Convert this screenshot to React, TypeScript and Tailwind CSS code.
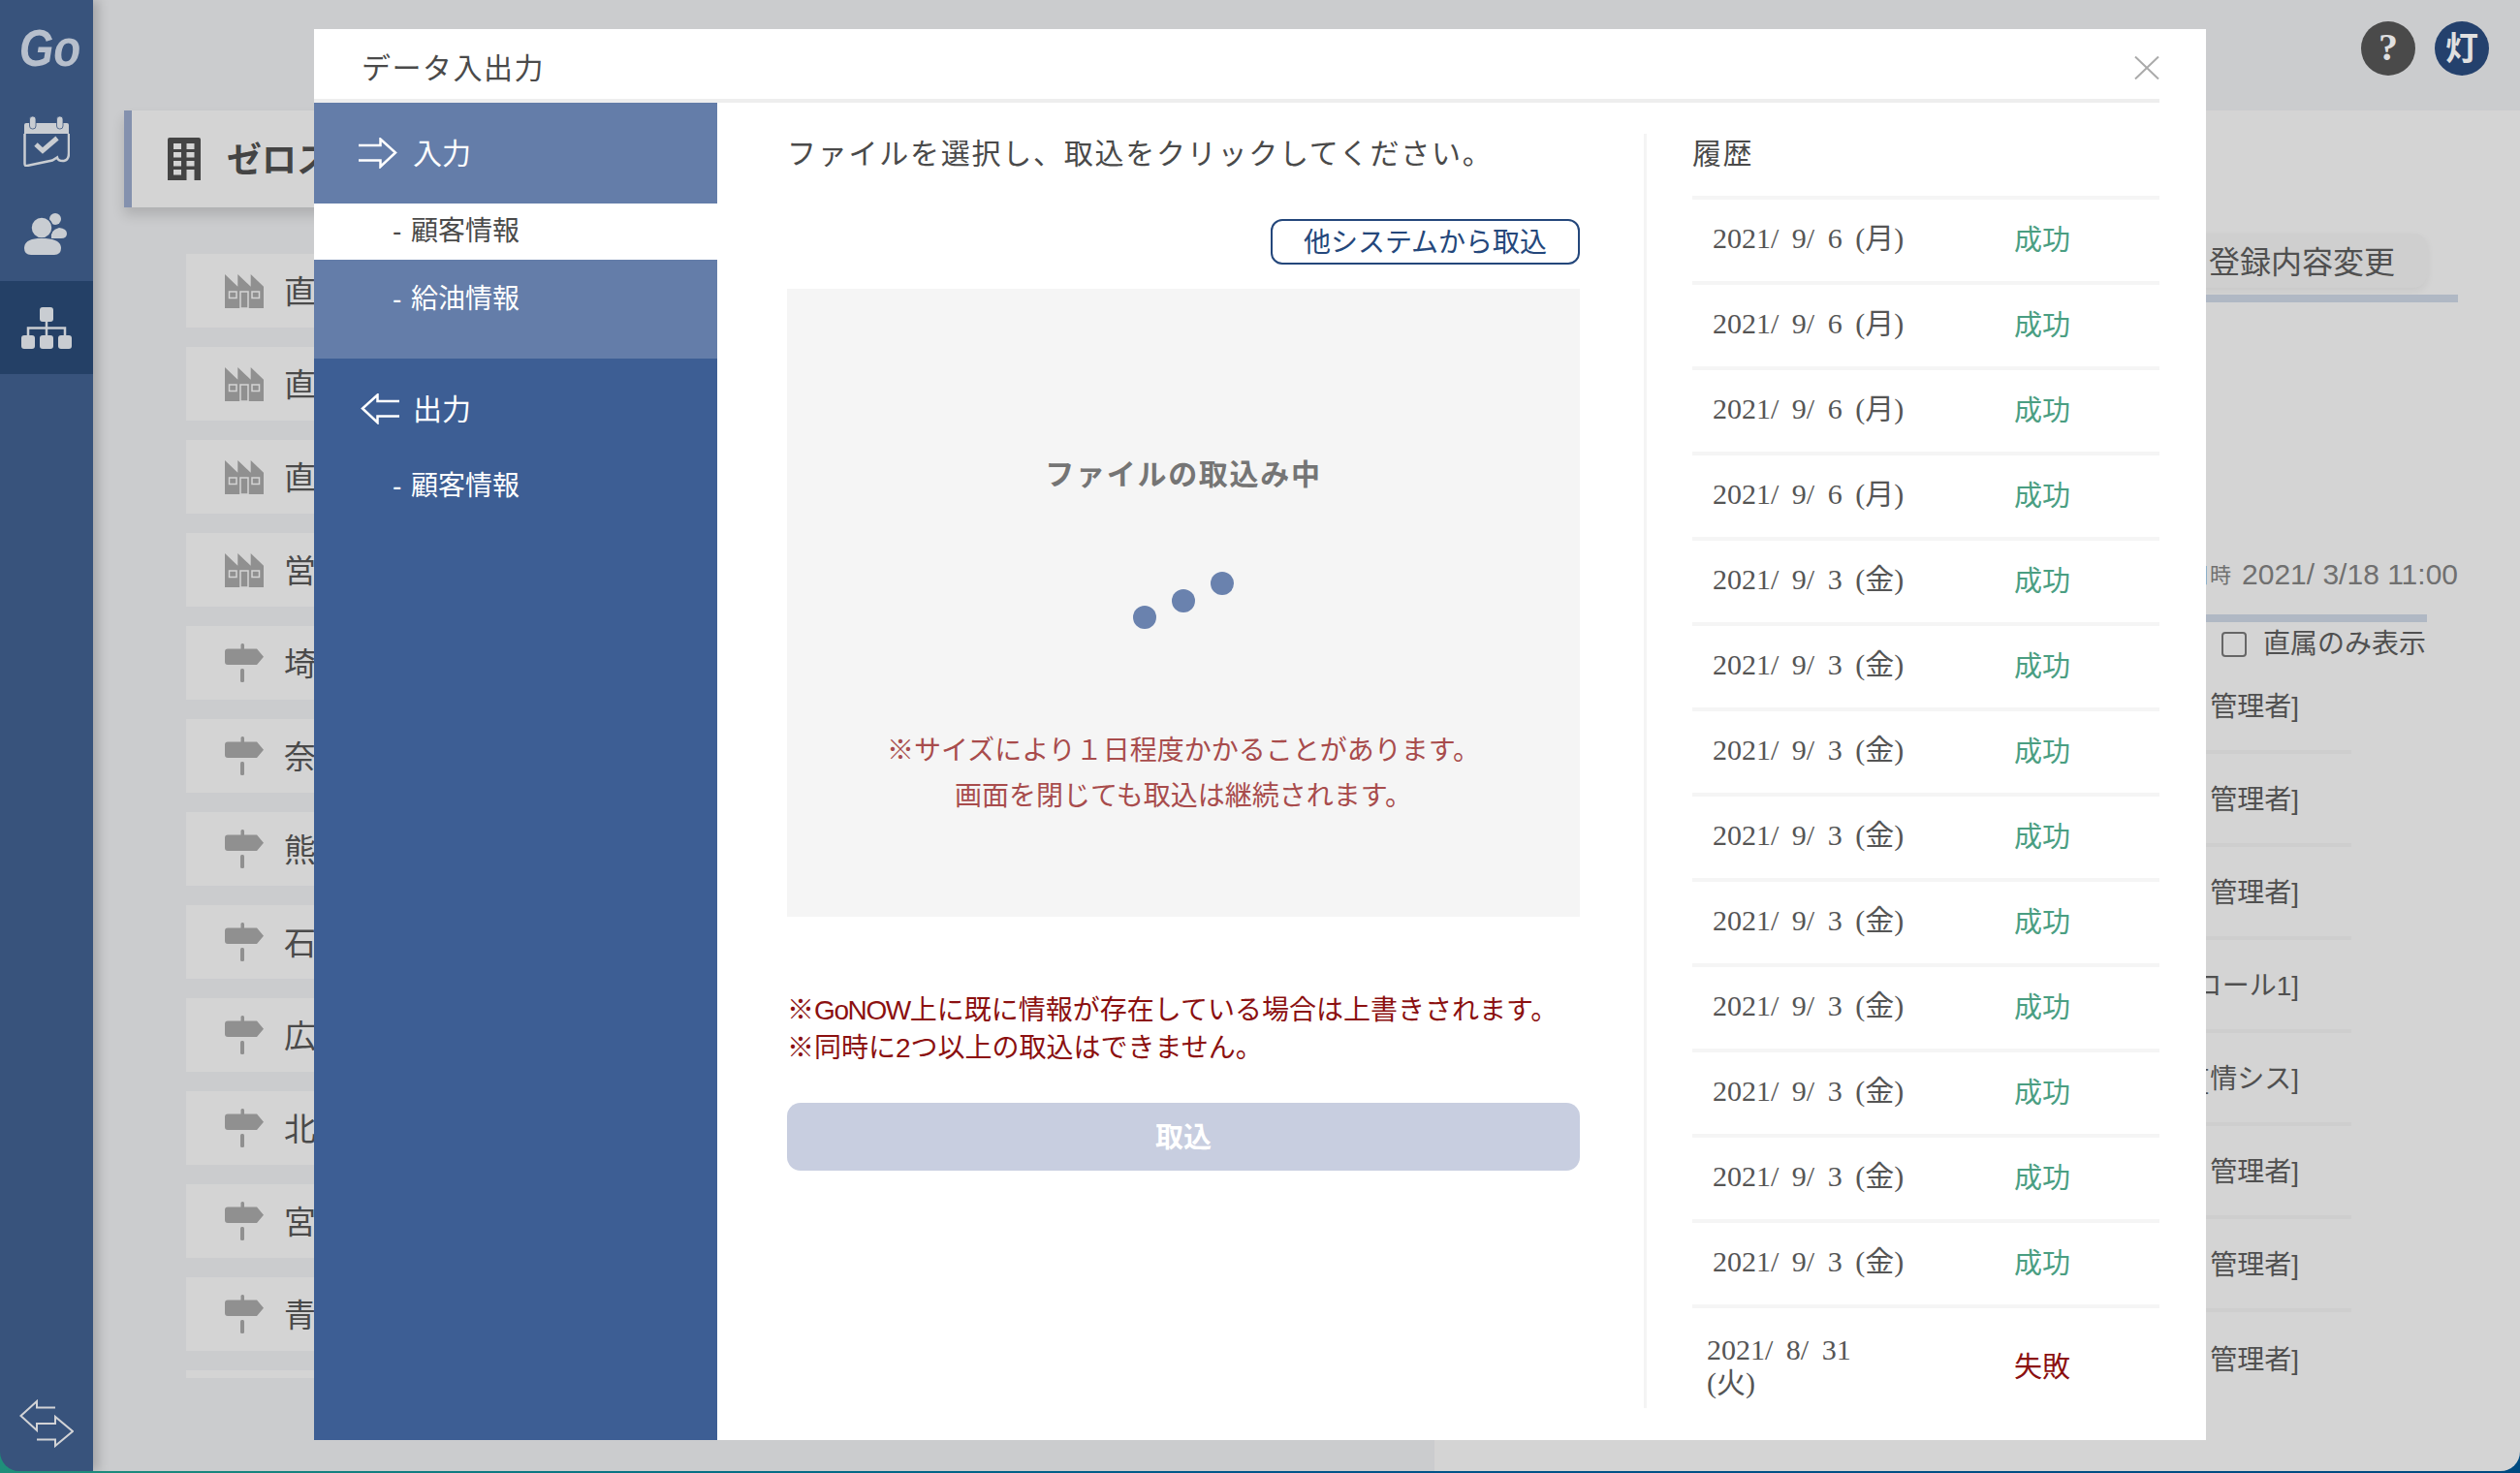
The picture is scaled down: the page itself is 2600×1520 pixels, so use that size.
const sans = "[font-family:'Liberation_Sans','Noto_Sans_CJK_JP',sans-serif]";

const historyRows = [
  "2021/ 9/ 6 (月)",
  "2021/ 9/ 6 (月)",
  "2021/ 9/ 6 (月)",
  "2021/ 9/ 6 (月)",
  "2021/ 9/ 3 (金)",
  "2021/ 9/ 3 (金)",
  "2021/ 9/ 3 (金)",
  "2021/ 9/ 3 (金)",
  "2021/ 9/ 3 (金)",
  "2021/ 9/ 3 (金)",
  "2021/ 9/ 3 (金)",
  "2021/ 9/ 3 (金)",
  "2021/ 9/ 3 (金)",
];

const orgRows = [
  { icon: "factory", name: "直営業部" },
  { icon: "factory", name: "直販部" },
  { icon: "factory", name: "直送部" },
  { icon: "factory", name: "営業部" },
  { icon: "sign", name: "埼玉支店" },
  { icon: "sign", name: "奈良支店" },
  { icon: "sign", name: "熊本支店" },
  { icon: "sign", name: "石川支店" },
  { icon: "sign", name: "広島支店" },
  { icon: "sign", name: "北海道支店" },
  { icon: "sign", name: "宮城支店" },
  { icon: "sign", name: "青森支店" },
  { icon: "sign", name: "" },
];

const roles = ["管理者", "管理者", "管理者", "コール1", "情シス", "管理者", "管理者", "管理者"];

function CalendarIcon() {
  return (
    <svg width="48" height="52" viewBox="0 0 48 52" fill="none">
      <path d="M1 18V9a2 2 0 0 1 2-2h42a2 2 0 0 1 2 2v9z" fill="#c9cdd2" />
      <rect x="6.5" y="0" width="6.500" height="13" rx="3" fill="#c9cdd2" stroke="#38537c" strokeWidth="0.8" />
      <rect x="34.5" y="0" width="6.500" height="13" rx="3" fill="#c9cdd2" stroke="#38537c" strokeWidth="0.8" />
      <path d="M1.500 18V49q0 2.500 2.500 2L30 45.500l5-3q1 4 7 3.500q5-1 5-8V18" stroke="#c9cdd2" strokeWidth="2.500" />
      <path d="M13 29l7 6.500L35 22.500" stroke="#c9cdd2" strokeWidth="5" />
    </svg>
  );
}

function UserIcon() {
  return (
    <svg width="46" height="44" viewBox="26 220 46 44">
      <circle cx="58" cy="226" r="6" fill="#c9cdd2" />
      <path d="M54 246q-2-8 8-11q8 1 8 6q0 5-6 5z" fill="#c9cdd2" />
      <circle cx="44" cy="235" r="11" fill="#c9cdd2" stroke="#38537c" strokeWidth="1.500" />
      <path d="M26 256q0-9 14-10h8q16 1 16 10q0 7-7 7H33q-7 0-7-7z" fill="#c9cdd2" />
    </svg>
  );
}

function OrgIcon() {
  return (
    <svg width="52" height="43" viewBox="22 316 52 43">
      <path d="M48 331v14M29 345v-7.500h38v7.500" fill="none" stroke="#c9cdd2" strokeWidth="2.500" />
      <rect x="41" y="316" width="14" height="15" rx="3" fill="#c9cdd2" />
      <rect x="22" y="345" width="14" height="14" rx="3" fill="#c9cdd2" />
      <rect x="41" y="345" width="14" height="14" rx="3" fill="#c9cdd2" />
      <rect x="60" y="345" width="14" height="14" rx="3" fill="#c9cdd2" />
    </svg>
  );
}

function SwapIcon() {
  return (
    <svg width="56" height="50" viewBox="20 1445 56 50" fill="none" stroke="#d2d3d6" strokeWidth="2">
      <path d="M57 1453.500H38V1447L21.500 1462 38 1477v-7H57" />
      <path d="M38 1486.500H57V1493L75 1478 57 1463v7H38" />
    </svg>
  );
}

function BuildingIcon() {
  return (
    <svg width="34" height="44" viewBox="0 0 34 44">
      <path d="M0 44V2a2 2 0 0 1 2-2h30a2 2 0 0 1 2 2v42z" fill="#444444" />
      <rect x="6" y="6" width="8" height="6" fill="#d4d4d4" />
      <rect x="19.500" y="6" width="8" height="6" fill="#d4d4d4" />
      <rect x="6" y="15" width="8" height="5.500" fill="#d4d4d4" />
      <rect x="19.500" y="15" width="8" height="5.500" fill="#d4d4d4" />
      <rect x="6" y="24" width="8" height="5.500" fill="#d4d4d4" />
      <rect x="19.500" y="24" width="8" height="5.500" fill="#d4d4d4" />
      <rect x="6" y="33" width="8" height="5.500" fill="#d4d4d4" />
      <rect x="19.500" y="33" width="8" height="11" fill="#d4d4d4" />
    </svg>
  );
}

function FactoryIcon() {
  return (
    <svg width="40" height="35" viewBox="0 0 40 35" className="shrink-0">
      <path d="M0 0l13.300 12.700V0l13.400 12.700V0L40 12.700V35H0z" fill="#909090" />
      <rect x="4.500" y="18" width="7.500" height="6.500" fill="#909090" stroke="#d4d4d4" strokeWidth="1.500" />
      <rect x="16" y="18" width="8" height="17" fill="#909090" stroke="#d4d4d4" strokeWidth="1.500" />
      <rect x="28" y="18" width="7.500" height="6.500" fill="#909090" stroke="#d4d4d4" strokeWidth="1.500" />
    </svg>
  );
}

function SignIcon() {
  return (
    <svg width="40" height="40" viewBox="0 0 40 40" className="shrink-0">
      <rect x="16.500" y="0" width="3.500" height="8" rx="1.500" fill="#909090" />
      <path d="M3 5.500H33L40 13.700 33 22H3a3 3 0 0 1-3-3V8.500a3 3 0 0 1 3-3z" fill="#909090" />
      <rect x="16" y="26" width="4" height="14" rx="1.500" fill="#909090" />
    </svg>
  );
}

function Sidebar() {
  return (
    <aside className="relative z-10 w-[96px] shrink-0 bg-[#38537c] shadow-[6px_0_10px_rgba(0,0,0,0.18)] flex flex-col items-stretch">
      <div className="h-[98px] flex items-center justify-center pl-[6px]">
        <span className="text-[54px] font-bold italic text-[#b7bfcc] scale-x-[0.85] leading-none">Go</span>
      </div>
      <div className="h-[96px] flex items-center justify-center">
        <CalendarIcon />
      </div>
      <div className="h-[96px] flex items-center justify-center">
        <UserIcon />
      </div>
      <div className="h-[96px] flex items-center justify-center bg-[#244066]">
        <OrgIcon />
      </div>
      <div className="mt-auto pb-[24px] pl-[20px]">
        <SwapIcon />
      </div>
    </aside>
  );
}

function BackgroundLeft() {
  return (
    <div className="w-[1384px] shrink-0 pl-[32px] bg-[#cbccce] h-full">
      <div className="w-[1200px] h-[100px] border-l-8 border-[#8491ae] bg-[#d4d4d4] shadow-[0_8px_12px_rgba(0,0,0,0.14)] flex items-center pl-[37px] gap-[27px]">
        <BuildingIcon />
        {/* clipped where the modal starts */}
        <span className="w-[90px] overflow-hidden whitespace-nowrap pt-[3px] text-[36px] font-bold text-[#444444]">ゼロスタート</span>
      </div>
      <div className="mt-[48px] ml-[64px] w-[1200px] h-[1160px] overflow-hidden flex flex-col gap-[20px]">
        {orgRows.map((row, i) => (
          <div key={i} className="h-[76px] shrink-0 bg-[#d4d4d4] flex items-center pl-[40px] gap-[21px]">
            {row.icon === "factory" ? <FactoryIcon /> : <SignIcon />}
            <span className="w-[31px] overflow-hidden whitespace-nowrap pt-[4px] text-[33px] text-[#4a4a4a]">{row.name}</span>
          </div>
        ))}
      </div>
    </div>
  );
}

function BackgroundRight() {
  return (
    <div className="flex-1 bg-[#d4d4d4] h-full flex flex-col items-end text-[#505050]">
      <div className="mt-[127px] mr-[96px] h-[56px] w-[500px] flex items-center justify-end pr-[33px] pt-[3px] text-[32px] bg-[#cfcfcf] rounded-[14px] shadow-[0_3px_8px_rgba(0,0,0,0.06)]">
        登録内容変更
      </div>
      <div className="mt-[7px] mr-[64px] h-[8px] w-[800px] bg-[#b0b8c4]" />
      <div className="mt-[260px] mr-[64px] h-[40px] flex items-center gap-[11px] text-[30px] text-[#707070]">
        <span className="text-[22px] pt-[3px]">更新日時</span>
        2021/ 3/18 11:00
      </div>
      <div className="mt-[22px] mr-[96px] h-[8px] w-[800px] bg-[#b0b8c4]" />
      <div className="mt-[10px] mr-[97px] h-[26px] flex items-center gap-[17px] text-[28px]">
        <span className="w-[26px] h-[26px] rounded-[4px] border-2 border-[#666666]" />
        直属のみ表示
      </div>
      <div className="mt-[4px] mr-[174px] w-[700px]">
        {roles.map((role, i) => (
          <div
            key={i}
            className={`h-[96px] flex items-center justify-end pr-[54px] pt-[3px] text-[28px] ${
              i < roles.length - 1 ? "border-b-4 border-[#cecece]" : ""
            }`}
          >
            <span className={role === "情シス" ? "mr-[2px]" : "mr-[7px]"}>[</span>
            {role}]
          </div>
        ))}
      </div>
    </div>
  );
}

function MenuArrow({ flip }: { flip?: boolean }) {
  return (
    <svg width="40" height="32" viewBox="0 0 40 32" fill="none" stroke="#ffffff" strokeWidth="2.500" className={flip ? "-scale-x-100" : ""}>
      <path d="M0 8H22.500V1.500L38 15.500 22.500 30V23.500H0" />
    </svg>
  );
}

function MenuColumn() {
  return (
    <nav className="w-[416px] shrink-0 flex flex-col bg-[#3d5e94] text-white [word-spacing:2px]">
      <div className="h-[104px] bg-[#647da9] flex items-center pl-[46px] gap-[16px] text-[30px]">
        <MenuArrow />
        入力
      </div>
      <div className="h-[58px] bg-white flex items-center pl-[81px] text-[28px] text-[#4a4a4a]">- 顧客情報</div>
      <div className="h-[102px] bg-[#647da9] pl-[81px] text-[28px] flex items-start pt-[20px]">- 給油情報</div>
      <div className="h-[104px] flex items-center pl-[48px] gap-[14px] text-[30px]">
        <MenuArrow flip />
        出力
      </div>
      <div className="h-[56px] flex items-center pl-[81px] text-[28px]">- 顧客情報</div>
    </nav>
  );
}

function ImportColumn() {
  return (
    <div className="w-[818px] ml-[72px] shrink-0 pt-[32px] flex flex-col">
      <p className="h-[42px] leading-[42px] text-[30px] tracking-[1.750px] text-[#4a4a4a] whitespace-nowrap">
        ファイルを選択し、取込をクリックしてください。
      </p>
      <div className="mt-[46px] flex justify-end">
        <button className="w-[319px] h-[47px] pt-[2px] border-2 border-[#24477b] rounded-[12px] text-[28px] leading-none text-[#24477b]">
          他システムから取込
        </button>
      </div>
      <div className="mt-[25px] h-[648px] bg-[#f5f5f5] flex flex-col items-center pt-[170px]">
        <p className="h-[44px] leading-[44px] text-[30px] tracking-[1.700px] font-bold text-[#757575]">ファイルの取込み中</p>
        <div className="mt-[78px] flex gap-[16px] h-[59px]">
          <span className="mt-[35px] w-[24px] h-[24px] rounded-full bg-[#6a82ae]" />
          <span className="mt-[18px] w-[24px] h-[24px] rounded-full bg-[#6a82ae]" />
          <span className="w-[24px] h-[24px] rounded-full bg-[#6a82ae]" />
        </div>
        <p className="mt-[102px] text-center text-[28px] leading-[47px] text-[#a84c4c]">
          ※サイズにより１日程度かかることがあります。
          <br />
          画面を閉じても取込は継続されます。
        </p>
      </div>
      <p className="mt-[77px] text-[28px] leading-[39px] text-[#8b1010] whitespace-nowrap">
        ※<span className="tracking-[-1.400px]">GoNOW</span>上に既に情報が存在している場合は上書きされます。
        <br />
        ※同時に2つ以上の取込はできません。
      </p>
      <button className="mt-[37px] h-[70px] pt-[4px] rounded-[14px] bg-[#c8cee0] text-[29px] font-bold text-white">取込</button>
    </div>
  );
}

function HistoryColumn() {
  const date = "[font-family:'Liberation_Serif','Noto_Sans_CJK_JP',serif] [word-spacing:6px] text-[30px] text-[#555555]";
  return (
    <div className="w-[482px] ml-[47px] shrink-0 pt-[32px]">
      <h2 className="h-[42px] leading-[42px] text-[30px] tracking-[1.500px] font-normal text-[#4a4a4a]">履歴</h2>
      <div className="mt-[22px]">
        {historyRows.map((d, i) => (
          <div key={i} className="h-[88px] border-t-4 border-[#f5f5f5] flex items-center">
            <span className={`w-[332px] pl-[21px] pb-[5px] shrink-0 ${date}`}>{d}</span>
            <span className="pt-[2px] text-[29px] text-[#4a9e82]">成功</span>
          </div>
        ))}
        <div className="h-[107px] pt-[16px] border-t-4 border-[#f5f5f5] flex items-center">
          <span className={`w-[332px] pl-[15px] pr-[120px] shrink-0 leading-[34px] ${date}`}>2021/ 8/ 31 (火)</span>
          <span className="pt-[4px] text-[29px] text-[#8b1010]">失敗</span>
        </div>
      </div>
    </div>
  );
}

export default function App() {
  return (
    <div className={`relative w-[2600px] h-[1520px] overflow-hidden bg-gradient-to-r from-[#1f8f7a] via-[#00558a] to-[#004a80] ${sans}`}>
      <div className="flex h-[1518px] rounded-b-[20px] overflow-hidden">
        <Sidebar />
        <div className="flex-1 flex flex-col">
          <header className="h-[114px] shrink-0 bg-[#cbccce] flex justify-end gap-[20px] pr-[32px] pt-[22px]">
            <span className="w-[56px] h-[56px] rounded-full bg-[#4a4a4a] flex items-center justify-center pb-[3px] text-[40px] font-bold text-[#e0e0e0] [font-family:'Liberation_Serif',serif]">
              ?
            </span>
            <span className="w-[56px] h-[56px] rounded-full bg-[#24416d] flex items-center justify-center text-[34px] font-bold text-[#e0e0e0]">
              灯
            </span>
          </header>
          <div className="flex-1 flex min-h-0">
            <BackgroundLeft />
            <BackgroundRight />
          </div>
        </div>
      </div>

      {/* データ入出力 modal */}
      <div className="absolute z-20 left-[324px] top-[30px] w-[1952px] h-[1456px] bg-white flex flex-col">
        <div className="h-[76px] w-[1904px] shrink-0 border-b-4 border-[#eeeeee] flex items-center justify-between pl-[49px] pt-[8px]">
          <h1 className="text-[30px] font-normal tracking-[1.500px] text-[#4a4a4a]">データ入出力</h1>
          <svg width="26" height="24" viewBox="0 0 26 24" fill="none" stroke="#aaaaaa" strokeWidth="2">
            <path d="M1 0.500L25 23.500M25 0.500L1 23.500" />
          </svg>
        </div>
        <div className="flex-1 flex min-h-0">
          <MenuColumn />
          <ImportColumn />
          <div className="ml-[66px] mt-[32px] w-[3px] h-[1315px] bg-[#f4f4f4] shrink-0" />
          <HistoryColumn />
        </div>
      </div>
    </div>
  );
}
